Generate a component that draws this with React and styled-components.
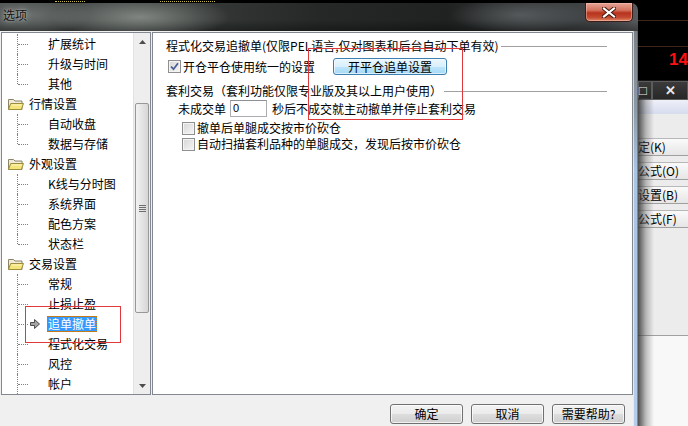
import React from 'react';
import styled, { createGlobalStyle, css } from 'styled-components';

const GlobalStyle = createGlobalStyle`
  html, body { margin: 0; padding: 0; background: #000; }
  body {
    font-family: "Noto Sans CJK SC", "Liberation Sans", sans-serif;
    font-size: 12px;
    color: #000;
  }
`;

const Screen = styled.div`
  width: 688px;
  height: 426px;
  display: flex;
  overflow: hidden;
  background: #000;
`;

/* ---------- dialog ---------- */

const Dialog = styled.div`
  position: relative;
  flex: 0 0 638px;
  display: flex;
  flex-direction: column;
`;

const TopPeek = styled.div`
  height: 3px;
  display: flex;
  gap: 75px;
  padding-left: 55px;
  background: #000;
`;

const Dash = styled.span`
  width: ${p => p.$w}px;
  height: 1px;
  margin-top: 1px;
  border-top: 1px dotted #c8b850;
`;

const TitleBar = styled.div`
  height: 28px;
  display: flex;
  align-items: flex-start;
  border-top-right-radius: 7px;
  background:
    radial-gradient(ellipse 90px 22px at 140px 14px, rgba(150, 156, 150, 0.75), transparent),
    radial-gradient(ellipse 60px 20px at 30px 12px, rgba(120, 126, 122, 0.7), transparent),
    radial-gradient(ellipse 70px 18px at 520px 12px, rgba(110, 114, 116, 0.6), transparent),
    linear-gradient(to bottom, rgba(0, 0, 0, 0) 60%, rgba(0, 0, 0, 0.35)),
    linear-gradient(to right, #4b5050, #3a3e3d 25%, #262828 50%, #202222 70%, #45484a 95%, #5a5d60);
`;

const Title = styled.span`
  padding: 4px 0 0 3px;
  line-height: 16px;
  font-size: 12px;
  color: #111;
  text-shadow: 0 0 6px rgba(230, 230, 230, 0.7), 0 0 2px rgba(230, 230, 230, 0.6);
`;

const CloseButton = styled.div`
  margin-left: auto;
  margin-right: 5px;
  width: 48px;
  height: 19px;
  box-sizing: border-box;
  display: flex;
  align-items: center;
  justify-content: center;
  border: 1px solid #3a1c18;
  border-top: none;
  border-radius: 0 0 5px 5px;
  box-shadow: inset 0 0 0 1px rgba(255, 200, 190, 0.45);
  background: linear-gradient(to bottom, #e5a597 0%, #d2735f 40%, #b8321c 55%, #c24a30 80%, #e08a6a 100%);
`;

const Frame = styled.div`
  flex: 1;
  display: flex;
`;

const Main = styled.div`
  flex: 1;
  display: flex;
  flex-direction: column;
  background: #f0f0f0;
  padding-left: 1px;
`;

const FrameEdge = styled.div`
  flex: 0 0 5px;
  background: linear-gradient(to bottom, #7c8186 0%, #8d9ba8 20%, #a9c5e4 35%, #b3cdea 100%);
  box-shadow: inset 1px 0 0 rgba(255, 255, 255, 0.6), inset -1px 0 0 rgba(60, 80, 100, 0.5);
`;

const Body = styled.div`
  height: 364px;
  box-sizing: border-box;
  padding-top: 1px;
  display: flex;
  gap: 1px;
`;

/* ---------- tree ---------- */

const Tree = styled.div`
  flex: 0 0 150px;
  box-sizing: border-box;
  border: 1px solid #828790;
  background: #fff;
  display: flex;
  overflow: hidden;
`;

const TreeList = styled.div`
  flex: 1;
  padding-top: 1px;
  display: flex;
  flex-direction: column;
  overflow: hidden;
`;

const Row = styled.div`
  position: relative;
  flex: none;
  height: 20px;
  display: flex;
  align-items: center;
  white-space: nowrap;
  padding-left: ${p => (p.$child ? 28 : 6)}px;
  ${p =>
    p.$child &&
    css`
      &::before {
        content: '';
        position: absolute;
        left: 15px;
        top: 0;
        bottom: ${p.$last ? '50%' : '0'};
        border-left: 1px dotted #808080;
      }
      &::after {
        content: '';
        position: absolute;
        left: 16px;
        top: 50%;
        width: 10px;
        border-top: 1px dotted #808080;
      }
    `}
`;

const Marker = styled.span`
  flex: 0 0 17px;
  display: flex;
  align-items: center;
`;

const Label = styled.span`
  padding: 0 1px;
  line-height: 16px;
  margin-left: ${p => (p.$parent ? 4 : 0)}px;
  ${p =>
    p.$selected &&
    css`
      background: #3399ff;
      color: #fff;
      outline: 1px dotted #c27a1a;
      outline-offset: -1px;
    `}
`;

const ScrollBar = styled.div`
  flex: 0 0 16px;
  display: flex;
  flex-direction: column;
  background: #eeeeee;
  border-left: 1px solid #e2e2e2;
`;

const ScrollArrow = styled.div`
  flex: 0 0 17px;
  display: flex;
  align-items: center;
  justify-content: center;
`;

const Track = styled.div`
  flex: 1;
  display: flex;
  flex-direction: column;
`;

const Thumb = styled.div`
  margin: 53px 1px 0 1px;
  height: 210px;
  box-sizing: border-box;
  border: 1px solid #979797;
  border-radius: 2px;
  background: linear-gradient(to right, #f2f2f2, #e4e4e4 50%, #d6d6d6);
  display: flex;
  align-items: center;
  justify-content: center;
`;

const Grip = styled.div`
  width: 7px;
  height: 7px;
  background: repeating-linear-gradient(to bottom, #6e6e6e 0 1px, transparent 1px 2px);
`;

/* ---------- content ---------- */

const Content = styled.div`
  flex: 0 0 481px;
  box-sizing: border-box;
  border: 1px solid #828790;
  background: #fff;
  padding: 5px 25px 0 13px;
  display: flex;
  flex-direction: column;
`;

const GroupHead = styled.div`
  display: flex;
  align-items: center;
  height: 16px;
  line-height: 16px;
  margin-top: ${p => p.$top || 0}px;
  white-space: nowrap;
  &::after {
    content: '';
    flex: 1;
    margin-left: 2px;
    border-top: 1px solid #a0a0a0;
  }
`;

const Line = styled.div`
  display: flex;
  align-items: center;
  height: ${p => p.$h || 16}px;
  line-height: 16px;
  margin-top: ${p => p.$top || 0}px;
  padding-left: ${p => p.$indent || 0}px;
  white-space: nowrap;
`;

const CheckItem = styled.label`
  display: flex;
  align-items: center;
  gap: 2px;
`;

const Box = styled.span`
  width: 13px;
  height: 13px;
  box-sizing: border-box;
  border: 1px solid #8f8f8f;
  background: linear-gradient(135deg, #d6d6d6, #f6f6f6);
  box-shadow: inset 0 0 0 1px #f4f4f4;
  display: flex;
  align-items: center;
  justify-content: center;
`;

const GlowButton = styled.div`
  margin-left: 18px;
  width: 114px;
  height: 17px;
  box-sizing: border-box;
  border: 1px solid #3c7fb1;
  border-radius: 3px;
  background: linear-gradient(to bottom, #eaf6fd 0%, #d9f0fc 50%, #bee6fd 50%, #a7d9f5 100%);
  box-shadow: inset 0 0 0 1px rgba(255, 255, 255, 0.6);
  display: flex;
  align-items: center;
  justify-content: center;
  line-height: 15px;
`;

const NumInput = styled.div`
  margin: 0 5px 0 4px;
  width: 37px;
  height: 17px;
  box-sizing: border-box;
  border: 1px solid #abadb3;
  border-top-color: #8e9097;
  background: #fff;
  padding-left: 2px;
  line-height: 15px;
  font-family: "Liberation Sans", sans-serif;
  font-size: 11px;
`;

/* ---------- footer ---------- */

const Footer = styled.div`
  flex: 1;
  display: flex;
  justify-content: flex-end;
  align-items: flex-start;
  gap: 8px;
  padding: 9px 8px 0 0;
`;

const DlgButton = styled.div`
  width: 73px;
  height: 20px;
  box-sizing: border-box;
  border: 1px solid #707070;
  border-radius: 3px;
  background: linear-gradient(to bottom, #f2f2f2 0%, #ebebeb 50%, #dddddd 50%, #cfcfcf 100%);
  box-shadow: inset 0 0 0 1px rgba(255, 255, 255, 0.7);
  display: flex;
  align-items: center;
  justify-content: center;
  line-height: 16px;
`;

const Note = styled.div`
  position: absolute;
  left: ${p => p.$x}px;
  top: ${p => p.$y}px;
  width: ${p => p.$w}px;
  height: ${p => p.$h}px;
  border: 1px solid #e0393b;
  pointer-events: none;
`;

/* ---------- background app ---------- */

const Backdrop = styled.div`
  position: relative;
  flex: 1;
  display: flex;
  flex-direction: column;
  overflow: hidden;
  &::after {
    content: '';
    position: absolute;
    left: 0;
    top: 98px;
    bottom: 0;
    width: 16px;
    background: linear-gradient(to right, rgba(50, 50, 50, 0.85), rgba(80, 80, 80, 0.35) 50%, rgba(0, 0, 0, 0));
  }
`;

const Ticker = styled.div`
  height: ${p => p.$h}px;
  flex: none;
  background: #000;
  border-bottom: ${p => (p.$rule ? '1px solid #3e261a' : 'none')};
`;

const Price = styled.div`
  height: 33px;
  flex: none;
  background: #000;
  padding: 3px 0 0 31px;
  box-sizing: border-box;
  color: #ff1010;
  font-family: "Liberation Sans", sans-serif;
  font-weight: bold;
  font-size: 17px;
  line-height: 20px;
  white-space: nowrap;
`;

const MiniBar = styled.div`
  height: 20px;
  flex: none;
  display: flex;
  background: linear-gradient(to bottom, #3c3c3c, #262626);
  border-top: 1px solid #1a1a1a;
  box-sizing: border-box;
`;

const MiniBtn = styled.div`
  flex: 0 0 ${p => p.$w}px;
  box-sizing: border-box;
  border: 1px solid #5c5c5c;
  display: flex;
  align-items: center;
  justify-content: ${p => p.$align || 'center'};
  color: #e8e8e8;
  font-family: "Liberation Sans", sans-serif;
  font-weight: bold;
  font-size: 13px;
`;

const Strip = styled.div`
  height: 14px;
  flex: none;
  background: linear-gradient(to bottom, #eef0f8, #d6dbee);
`;

const SidePanel = styled.div`
  height: 222px;
  flex: none;
  background: #ececec;
  border-bottom: 1px solid #a0a0a0;
  display: flex;
  flex-direction: column;
  gap: 6px;
  padding-top: 24px;
  box-sizing: border-box;
`;

const SideButton = styled.div`
  height: 18px;
  box-sizing: border-box;
  border-top: 1px solid #b8b8b8;
  border-bottom: 1px solid #a0a0a0;
  background: linear-gradient(to bottom, #fafafa, #e6e6e6);
  line-height: 16px;
  white-space: nowrap;
`;

const SideBottom = styled.div`
  flex: 1;
  background: #f8f8f8;
`;

/* ---------- icons ---------- */

const Folder = () => (
  <svg width="16" height="14" viewBox="0 0 16 14">
    <path d="M0.5 2.5h5l1.5 1.5h7v8.5h-13.5z" fill="#eeeadb" stroke="#8c8466" />
    <path d="M0.5 12.5l2.2-6h12.8l-2.2 6z" fill="#f4e47c" stroke="#9c8c3c" />
    <path d="M3.5 8h10" stroke="#fff7c0" />
  </svg>
);

const Pointer = () => (
  <svg width="10" height="10" viewBox="0 0 10 10">
    <path d="M0.5 3.5h4v-3l5 4.5-5 4.5v-3h-4z" fill="#a4a4a4" stroke="#4e4e4e" />
  </svg>
);

const Tick = () => (
  <svg width="9" height="9" viewBox="0 0 9 9">
    <polyline points="1,4.5 3.5,7.2 8,1.2" fill="none" stroke="#4a5f97" strokeWidth="1.8" />
  </svg>
);

const Tri = ({ up }) => (
  <svg width="7" height="4" viewBox="0 0 7 4">
    <path d={up ? 'M0 4h7L3.5 0z' : 'M0 0h7L3.5 4z'} fill="#4d4d4d" />
  </svg>
);

const CloseX = () => (
  <svg width="14" height="11" viewBox="0 0 14 11">
    <path d="M2 1.5l10 8M12 1.5l-10 8" stroke="#40140c" strokeWidth="4" strokeLinecap="square" />
    <path d="M2 1.5l10 8M12 1.5l-10 8" stroke="#fff" strokeWidth="2.2" strokeLinecap="square" />
  </svg>
);

/* ---------- data ---------- */

const groups = [
  { kids: ['扩展统计', '升级与时间', '其他'] },
  { label: '行情设置', kids: ['自动收盘', '数据与存储'] },
  { label: '外观设置', kids: ['K线与分时图', '系统界面', '配色方案', '状态栏'] },
  { label: '交易设置', kids: ['常规', '止损止盈', '追单撤单', '程式化交易', '风控', '帐户'], more: true },
];

const selected = '追单撤单';
const sideButtons = ['定(K)', '公式(O)', '设置(B)', '公式(F)'];

const Check = ({ checked, children }) => (
  <CheckItem>
    <Box>{checked && <Tick />}</Box>
    {children}
  </CheckItem>
);

export default function App() {
  return (
    <>
      <GlobalStyle />
      <Screen>
        <Dialog>
          <TopPeek>
            <Dash $w={30} />
            <Dash $w={55} />
          </TopPeek>
          <TitleBar>
            <Title>选项</Title>
            <CloseButton>
              <CloseX />
            </CloseButton>
          </TitleBar>
          <Frame>
            <Main>
              <Body>
                <Tree>
                  <TreeList>
                    {groups.map((g, gi) => (
                      <React.Fragment key={gi}>
                        {g.label && (
                          <Row>
                            <Folder />
                            <Label $parent>{g.label}</Label>
                          </Row>
                        )}
                        {g.kids.map((k, ki) => (
                          <Row key={k} $child $last={!g.more && ki === g.kids.length - 1}>
                            <Marker>{k === selected && <Pointer />}</Marker>
                            <Label $selected={k === selected}>{k}</Label>
                          </Row>
                        ))}
                      </React.Fragment>
                    ))}
                  </TreeList>
                  <ScrollBar>
                    <ScrollArrow>
                      <Tri up />
                    </ScrollArrow>
                    <Track>
                      <Thumb>
                        <Grip />
                      </Thumb>
                    </Track>
                    <ScrollArrow>
                      <Tri />
                    </ScrollArrow>
                  </ScrollBar>
                </Tree>
                <Content>
                  <GroupHead>程式化交易追撤单(仅限PEL语言,仅对图表和后台自动下单有效)</GroupHead>
                  <Line $h={17} $top={4} $indent={2}>
                    <Check checked>开仓平仓使用统一的设置</Check>
                    <GlowButton>开平仓追单设置</GlowButton>
                  </Line>
                  <GroupHead $top={8}>套利交易（套利功能仅限专业版及其以上用户使用）</GroupHead>
                  <Line $h={17} $top={1} $indent={12}>
                    未成交单
                    <NumInput>0</NumInput>
                    秒后不成交就主动撤单并停止套利交易
                  </Line>
                  <Line $top={3} $indent={16}>
                    <Check>撤单后单腿成交按市价砍仓</Check>
                  </Line>
                  <Line $indent={16}>
                    <Check>自动扫描套利品种的单腿成交，发现后按市价砍仓</Check>
                  </Line>
                </Content>
              </Body>
              <Footer>
                <DlgButton>确定</DlgButton>
                <DlgButton>取消</DlgButton>
                <DlgButton>需要帮助?</DlgButton>
              </Footer>
            </Main>
            <FrameEdge />
          </Frame>
          <Note $x={25} $y={306} $w={94} $h={35} />
          <Note $x={308} $y={48} $w={153} $h={70} />
        </Dialog>
        <Backdrop>
          <Ticker $h={20} $rule />
          <Ticker $h={25} $rule />
          <Price>149</Price>
          <MiniBar>
            <MiniBtn $w={14} $align="flex-start">□</MiniBtn>
            <MiniBtn $w={36}>✕</MiniBtn>
          </MiniBar>
          <Strip />
          <SidePanel>
            {sideButtons.map(b => (
              <SideButton key={b}>{b}</SideButton>
            ))}
          </SidePanel>
          <SideBottom />
        </Backdrop>
      </Screen>
    </>
  );
}
